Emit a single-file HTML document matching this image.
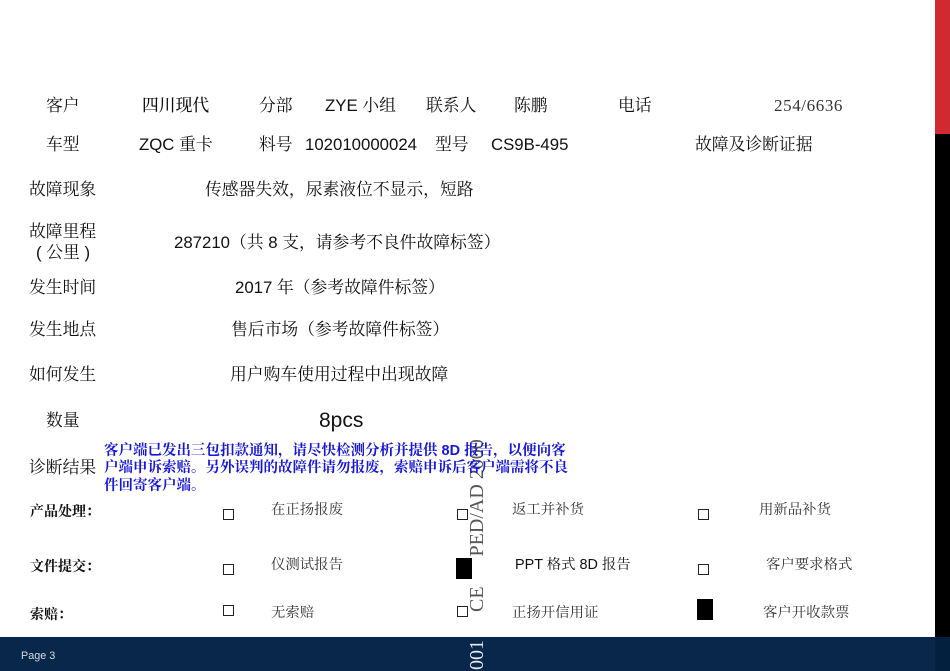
<!DOCTYPE html>
<html lang="zh">
<head>
<meta charset="utf-8">
<style>
html,body{margin:0;padding:0;background:#fff;}
#p{position:relative;width:950px;height:671px;overflow:hidden;background:#fff;font-family:"Liberation Sans","Noto Serif CJK SC",serif;color:#111;}
.t{position:absolute;white-space:nowrap;font-size:16.8px;line-height:20px;height:20px;margin-top:1px;}
.t.s{font-size:14.4px;}
.t.b{font-weight:bold;font-size:14px;font-family:"Liberation Sans","Noto Serif CJK SC",serif;}
.c{position:absolute;width:9px;height:9px;border:1px solid #222;background:#fff;}
.f{position:absolute;width:16px;height:21px;background:#000;}
.bl{position:absolute;left:104px;font-size:14.5px;font-weight:bold;color:#1616d8;line-height:17.5px;height:18px;white-space:nowrap;}
.r{position:absolute;white-space:nowrap;font-family:"Liberation Serif",serif;transform-origin:0 0;transform:rotate(-90deg);}
</style>
</head>
<body>
<div id="p">
<div class="r" style="left:467px;top:612px;font-size:20px;line-height:20px;color:#555;">CE&nbsp;&nbsp;&nbsp;&nbsp;&nbsp;&nbsp;PED/AD 2000</div>

<span class="t" style="left:46px;top:95px;">客户</span>
<span class="t" style="left:142px;top:95px;font-weight:500;">四川现代</span>
<span class="t" style="left:259px;top:95px;">分部</span>
<span class="t" style="left:325px;top:95px;">ZYE 小组</span>
<span class="t" style="left:426px;top:95px;">联系人</span>
<span class="t" style="left:514px;top:95px;">陈鹏</span>
<span class="t" style="left:618px;top:95px;">电话</span>
<span class="t" style="left:774px;top:95px;font-family:'Liberation Serif',serif;font-size:17px;letter-spacing:.6px;color:#333;">254/6636</span>

<span class="t" style="left:46px;top:134px;">车型</span>
<span class="t" style="left:139px;top:134px;">ZQC 重卡</span>
<span class="t" style="left:259px;top:134px;">料号</span>
<span class="t" style="left:305px;top:134px;">102010000024</span>
<span class="t" style="left:435px;top:134px;">型号</span>
<span class="t" style="left:491px;top:134px;">CS9B-495</span>
<span class="t" style="left:695px;top:134px;">故障及诊断证据</span>

<span class="t" style="left:29px;top:179px;">故障现象</span>
<span class="t" style="left:205px;top:179px;">传感器失效，尿素液位不显示，短路</span>

<span class="t" style="left:29px;top:221px;">故障里程</span>
<span class="t" style="left:36px;top:242px;">( 公里 )</span>
<span class="t" style="left:174px;top:232px;">287210（共 8 支，请参考不良件故障标签）</span>

<span class="t" style="left:29px;top:277px;">发生时间</span>
<span class="t" style="left:235px;top:277px;">2017 年（参考故障件标签）</span>

<span class="t" style="left:29px;top:319px;">发生地点</span>
<span class="t" style="left:231px;top:319px;">售后市场（参考故障件标签）</span>

<span class="t" style="left:29px;top:364px;">如何发生</span>
<span class="t" style="left:230px;top:364px;">用户购车使用过程中出现故障</span>

<span class="t" style="left:46px;top:410px;">数量</span>
<span class="t" style="left:319px;top:410px;font-size:21px;">8pcs</span>

<span class="t" style="left:29px;top:457px;">诊断结果</span>
<div class="bl" style="top:443px;">客户端已发出三包扣款通知，请尽快检测分析并提供 8D 报告，以便向客</div>
<div class="bl" style="top:460px;">户端申诉索赔。另外误判的故障件请勿报废，索赔申诉后客户端需将不良</div>
<div class="bl" style="top:478px;">件回寄客户端。</div>

<span class="t b" style="left:30px;top:500px;">产品处理：</span>
<span class="c" style="left:223px;top:509px;"></span>
<span class="t s" style="left:271px;top:499px;color:#333;">在正扬报废</span>
<span class="c" style="left:457px;top:509px;"></span>
<span class="t s" style="left:512px;top:499px;color:#333;">返工并补货</span>
<span class="c" style="left:698px;top:509px;"></span>
<span class="t s" style="left:759px;top:499px;color:#333;">用新品补货</span>

<span class="t b" style="left:30px;top:555px;">文件提交：</span>
<span class="c" style="left:223px;top:564px;"></span>
<span class="t s" style="left:271px;top:554px;color:#333;">仪测试报告</span>
<span class="f" style="left:456px;top:558px;"></span>
<span class="t s" style="left:515px;top:554px;">PPT 格式 8D 报告</span>
<span class="c" style="left:698px;top:564px;"></span>
<span class="t s" style="left:766px;top:554px;color:#333;">客户要求格式</span>

<span class="t b" style="left:30px;top:603px;">索赔：</span>
<span class="c" style="left:223px;top:605px;"></span>
<span class="t s" style="left:271px;top:602px;color:#333;">无索赔</span>
<span class="c" style="left:457px;top:606px;"></span>
<span class="t s" style="left:512px;top:602px;color:#333;">正扬开信用证</span>
<span class="f" style="left:697px;top:599px;"></span>
<span class="t s" style="left:763px;top:602px;color:#333;">客户开收款票</span>

<div style="position:absolute;left:935px;top:0;width:15px;height:134px;background:#d02a31;"></div>
<div style="position:absolute;left:935px;top:134px;width:15px;height:503px;background:#000;"></div>
<div style="position:absolute;left:0;top:637px;width:935px;height:34px;background:#09274a;"></div>
<div style="position:absolute;left:935px;top:637px;width:15px;height:34px;background:#04203f;"></div>
<span class="t" style="left:21px;top:645px;font-size:10.8px;color:#d5dbe3;">Page 3</span>
<div class="r" style="left:467px;top:675px;font-size:20px;line-height:20px;color:#e8ecf0;">.001</div>
</div>
</body>
</html>
